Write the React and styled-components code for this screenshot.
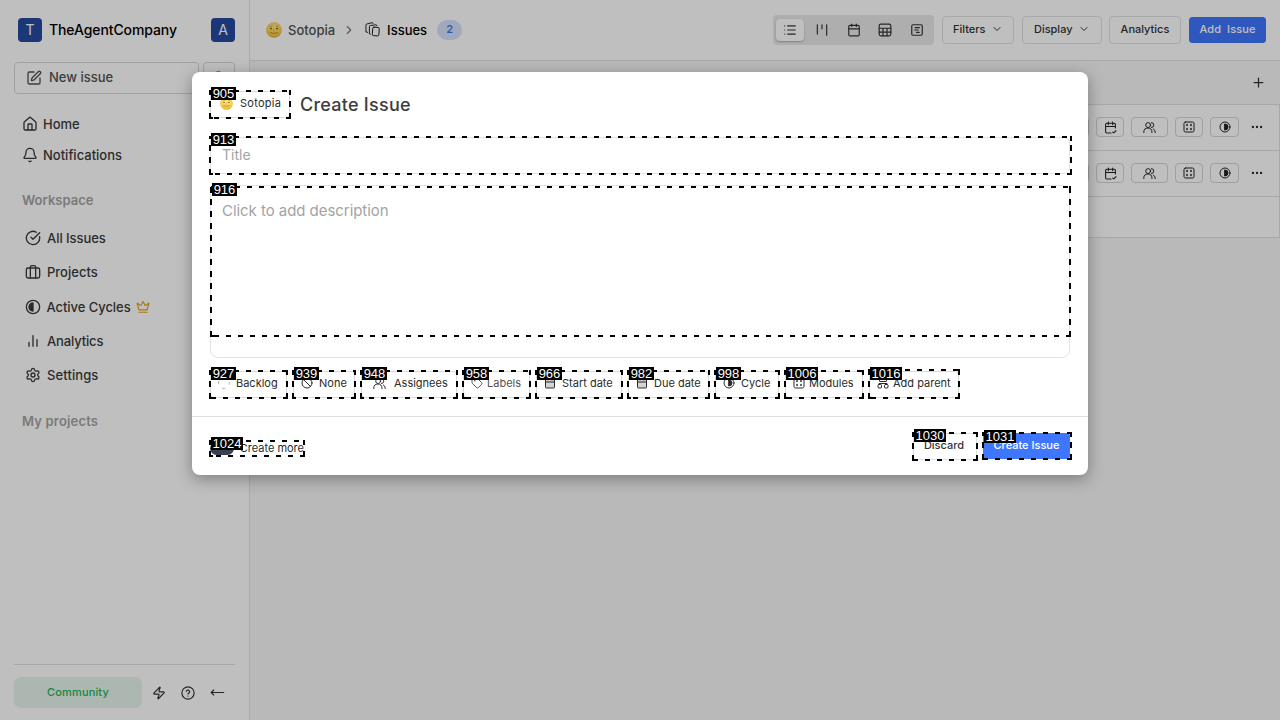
import React from "react";
import styled, { createGlobalStyle } from "styled-components";
import {
  SquarePen, Search, House, Bell, CircleCheckBig, Crown, Settings, Zap,
  MoveLeft, ChevronRight, ChevronDown, List, Calendar, SquareChartGantt, Plus, Ellipsis, Tag, Ban,
} from "lucide-react";

const Global = createGlobalStyle`
  * { box-sizing: border-box; }
  body { margin: 0; background: #f7f7f7; font-family: Inter, "Liberation Sans", sans-serif; color: #171717; overflow: hidden; }
  svg { flex: none; display: block; }
`;

const Screen = styled.div`position: relative; width: 1280px; height: 720px; display: flex; overflow: hidden;`;

/* Sidebar */
const Sidebar = styled.aside`
  width: 250px; height: 720px; flex: none; background: #fff; border-right: 1px solid #e3e3e3;
  padding: 18px 14px 12px; display: flex; flex-direction: column;
`;
const Brand = styled.div`display: flex; align-items: center; height: 24px; padding-left: 4px;`;
const Avatar = styled.span`
  width: 24px; height: 24px; border-radius: 4px; background: #264aa0; color: #fff;
  display: flex; align-items: center; justify-content: center; font-size: 14px; line-height: 24px;
`;
const BrandName = styled.span`flex: 1; margin: -2px 0 0 7px; font-size: 14px; font-weight: 500; color: #000; letter-spacing: -0.1px;`;
const Actions = styled.div`display: flex; gap: 4px; margin-top: 20px;`;
const ActionButton = styled.div`
  height: 32px; width: ${(p) => p.$w}px; border: 1px solid #d6d6d6; border-radius: 4px; display: flex; align-items: center;
  padding-left: ${(p) => p.$pad}px; gap: 7px; font-size: 13px; font-weight: 500; color: #525252;
`;
const ActionText = styled.span`margin-top: -3px;`;
const Nav = styled.nav`display: flex; flex-direction: column; padding-left: ${(p) => p.$pad}px; margin-top: ${(p) => p.$top}px;`;
const NavItem = styled.div`
  height: ${(p) => p.$h}px; display: flex; align-items: center; gap: ${(p) => p.$gap || 6}px;
  font-size: 13px; font-weight: 500; color: #3a3a3a; letter-spacing: ${(p) => p.$ls || 0}px;
`;
const Heading = styled.div`
  margin: ${(p) => p.$top}px 0 0 8px; height: 20px; line-height: 20px; font-size: 13px; font-weight: 600; color: #a3a3a3;
  letter-spacing: ${(p) => p.$ls || 0}px;
`;
const SideFoot = styled.div`
  margin-top: auto; border-top: 1px solid #e0e0e0; padding-top: 12px; display: flex; align-items: center; color: #333;
`;
const Community = styled.div`
  width: 128px; height: 31px; flex: none; border-radius: 7px; background: #e6f5ec; color: #22b35a; font-size: 11px; font-weight: 500;
  display: flex; align-items: center; justify-content: center; margin-right: 2px; padding-bottom: 2px; letter-spacing: .15px;
`;
const FootIcon = styled.span`width: 29.5px; display: flex; justify-content: center;`;

/* Main area */
const Main = styled.main`flex: 1; display: flex; flex-direction: column;`;
const TopBar = styled.header`
  height: 61px; background: #fff; border-bottom: 1px solid #e0e0e0; display: flex; align-items: center; padding: 0 14px 1px 15px;
`;
const Crumb = styled.span`font-size: 13px; font-weight: 500; color: ${(p) => p.$c}; margin-left: ${(p) => p.$ml}px;`;
const Gap = styled.span`width: ${(p) => p.$w}px; flex: none;`;
const Count = styled.span`
  width: 25px; height: 20px; border-radius: 10px; margin-left: 10px; background: #d6e0fb; color: #3f76ff; font-size: 11px;
  font-weight: 600; display: flex; align-items: center; justify-content: center; padding-bottom: 1px;
`;
const Segments = styled.div`
  margin-left: auto; width: 161px; height: 30px; border-radius: 4px; background: #e8e8e8; display: flex; align-items: center;
  gap: 3.75px; padding: 0 3px; color: #333;
`;
const Segment = styled.span`
  width: 28px; height: 22px; border-radius: 4px; display: flex; align-items: center; justify-content: center;
  background: ${(p) => (p.$on ? "#fff" : "transparent")}; box-shadow: ${(p) => (p.$on ? "0 1px 2px rgba(0,0,0,.25)" : "none")};
`;
const BarButton = styled.div`
  width: ${(p) => p.$w}px; height: ${(p) => (p.$primary ? 26 : 28)}px; margin-left: ${(p) => p.$ml}px; border-radius: ${(p) => (p.$primary ? 3 : 4)}px;
  border: 1px solid ${(p) => (p.$primary ? "#3f76ff" : "#e0e0e0")}; background: ${(p) => (p.$primary ? "#3f76ff" : "#fff")};
  color: ${(p) => (p.$primary ? "#fff" : "#333")}; font-size: 11px; font-weight: 500; white-space: pre;
  letter-spacing: ${(p) => p.$ls || 0}px; display: flex; align-items: center; justify-content: center; gap: 5.5px; padding-bottom: 1px;
`;
const GroupRow = styled.div`height: 44px; border-bottom: 1px solid #e0e0e0; display: flex; align-items: center; justify-content: flex-end; padding-right: 14px; color: #333;`;
const IssueRow = styled.div`
  height: ${(p) => p.$h}px; background: #fff; border-bottom: 1px solid #e0e0e0; border-right: 1px solid #e0e0e0; display: flex; align-items: center;
  justify-content: flex-end; padding: 0 15px 1px 0; gap: 7px; color: #222;
`;
const Prop = styled.span`
  width: ${(p) => p.$w}px; height: 20px; border: 1px solid #d4d4d4; border-radius: 4px; display: flex; align-items: center; justify-content: center;
`;
const More = styled.span`margin-left: 4px;`;

/* Dialog */
const Backdrop = styled.div`
  position: absolute; inset: 0; background: rgba(0, 0, 0, 0.25); display: flex; justify-content: center; align-items: flex-start; padding-top: 72px;
`;
const Dialog = styled.section`
  width: 896px; height: 403px; border-radius: 8px; background: #fff; box-shadow: 0 4px 16px rgba(0, 0, 0, 0.34);
  display: flex; flex-direction: column;
`;
const DialogBody = styled.div`height: 345px; border-bottom: 1px solid #e0e0e0; padding: 19px 18px 0; display: flex; flex-direction: column; align-items: flex-start;`;
const TitleRow = styled.div`display: flex; align-items: center; height: 27px;`;
const DialogTitle = styled.h3`margin: 0 0 0 10px; font-size: 18px; line-height: 27px; font-weight: 500; color: #3d3d3d; letter-spacing: .25px;`;
const Chip = styled.div`
  position: relative; width: ${(p) => p.$w}px; height: 27px; border: 1px solid #d9d9d9; border-radius: 4px; display: flex; align-items: center;
  padding: 0 0 3px ${(p) => p.$pad}px; gap: ${(p) => p.$gap}px; font-size: 11px; color: ${(p) => p.$c || "#2b2b2b"}; white-space: nowrap;
  letter-spacing: ${(p) => p.$ls || 0}px;
`;
const TitleField = styled.div`
  position: relative; margin-top: 19px; width: 860px; height: 37px; border: 1px solid #e3e3e3; border-radius: 6px; padding: 0 11px;
  font-size: 14px; line-height: 33px; color: #a3a3a3;
`;
const Editor = styled.div`
  position: relative; margin-top: 11px; width: 860px; height: 173px; border: 1px solid #e3e3e3; border-radius: 8px; padding: 13px 11px;
  font-size: 15px; line-height: 24px; color: #a3a3a3; letter-spacing: -0.05px;
`;
const Chips = styled.div`display: flex; gap: 6px; margin-top: 13px;`;
const DialogFoot = styled.footer`height: 58px; display: flex; align-items: flex-start; padding: 16px 18px 0;`;
const CreateMore = styled.div`
  position: relative; width: 94px; height: 15px; margin-top: 8px; display: flex; align-items: center; justify-content: space-between;
  font-size: 11px; line-height: 13px; color: #2b2b2b; white-space: nowrap; padding-bottom: 1px;
`;
const Toggle = styled.span`width: 24px; height: 13px; border-radius: 7px; background: #374151; flex: none;`;
const FootButton = styled.div`
  position: relative; width: ${(p) => p.$w}px; height: ${(p) => (p.$primary ? 26 : 27)}px; margin-left: ${(p) => p.$ml};
  border: 1px solid ${(p) => (p.$primary ? "#3f76ff" : "#e0e0e0")}; border-radius: 3px; background: ${(p) => (p.$primary ? "#3f76ff" : "#fff")};
  color: ${(p) => (p.$primary ? "#fff" : "#333")}; font-size: 11px; font-weight: 500; display: flex; align-items: center; justify-content: center;
  padding: 0 ${(p) => (p.$primary ? 0 : 2)}px ${(p) => (p.$primary ? 2 : 4)}px 0; white-space: nowrap;
`;

/* Numbered element markers laid over the controls */
const across = "repeating-linear-gradient(90deg, #000 0 5px, transparent 5px 12px)";
const acrossEnd = "repeating-linear-gradient(270deg, #000 0 5px, transparent 5px 12px)";
const upward = "repeating-linear-gradient(0deg, #000 0 6px, transparent 6px 12px)";
const solid = "linear-gradient(#000, #000)";
const Frame = styled.span`
  position: absolute; top: ${(p) => p.$t}px; left: ${(p) => p.$l}px; right: ${(p) => p.$r}px; bottom: ${(p) => p.$b}px;
  background:
    ${across} 1px 0 / 100% 2px no-repeat,
    ${acrossEnd} 0 100% / 100% 2px no-repeat,
    ${upward} 0 0 / 2px 100% no-repeat,
    ${upward} 100% 0 / 2px 100% no-repeat,
    ${solid} 100% 0 / 2px 5px no-repeat,
    ${solid} 0 100% / 4px 2px no-repeat;
  pointer-events: none;
`;
const Num = styled.span`
  position: absolute; left: 2px; top: ${(p) => p.$t}px; width: ${(p) => (p.$long ? 32 : 25)}px; height: 13px; background: #000; color: #fff;
  font: 13px/13px "Liberation Sans", Arial, sans-serif; letter-spacing: 0; text-align: center;
`;
const Mark = ({ n, t = -2, l = -2, r = -2, b = -2, lt = -3 }) => (
  <Frame $t={t} $l={l} $r={r} $b={b}><Num $t={lt} $long={n > 999}>{n}</Num></Frame>
);

/* Icons */
const Svg = ({ s = 14, w = 2, children, ...p }) => (
  <svg width={s} height={s} viewBox="0 0 24 24" fill="none" stroke="currentColor" strokeWidth={w} strokeLinecap="round" strokeLinejoin="round" {...p}>{children}</svg>
);
const Face = ({ s = 16 }) => (
  <svg width={s} height={s} viewBox="0 0 16 16">
    <defs><radialGradient id="moon" cx=".5" cy=".35" r=".65"><stop offset="0" stopColor="#ffe680" /><stop offset=".7" stopColor="#f8cf4a" /><stop offset="1" stopColor="#e3a92e" /></radialGradient></defs>
    <circle cx="8" cy="8" r="7.8" fill="url(#moon)" />
    <ellipse cx="5" cy="6.6" rx=".8" ry=".9" fill="#5b4520" /><ellipse cx="11" cy="6.6" rx=".8" ry=".9" fill="#5b4520" />
    <path d="M3.6 5q1.2-1 2.6-.3M9.8 4.7q1.4-.7 2.6.3" stroke="#c08a2a" strokeWidth=".6" fill="none" />
    <path d="M8 6.5l-.5 2.500h1" stroke="#d09a30" strokeWidth=".6" fill="none" />
    <path d="M4.500 10.800q3.500 1.400 7 0" stroke="#a8701f" strokeWidth=".8" fill="none" strokeLinecap="round" />
  </svg>
);
const Half = ({ left, s }) => (
  <Svg s={s}><circle cx="12" cy="12" r="10" /><path d={left ? "M12 6a6 6 0 0 0 0 12z" : "M12 6a6 6 0 0 1 0 12z"} fill="currentColor" /></Svg>
);
const Case = () => <Svg s={16}><rect x="2" y="6" width="20" height="15" rx="2.500" /><path d="M8 21V4.500A2 2 0 0 1 10 2.500h4a2 2 0 0 1 2 2V21" /></Svg>;
const Bars = () => <Svg s={16}><path d="M18 20V10M12 20V4M6 20v-6" /></Svg>;
const Help = () => <Svg s={14}><circle cx="12" cy="12" r="10.500" /><path d="M9 9a3 3 0 0 1 5.800 1c0 2-2.800 2.600-2.800 3.600M12 17.300h.01" /></Svg>;
const Stack = () => (
  <Svg s={15} w={1.500}><rect x="12" y="8.500" width="10.500" height="13.500" rx="2" transform="rotate(4 17 15)" /><path d="M8.500 19.500l-1.500-.5V7.500a2 2 0 0 1 2-2l9-1 .8 1.500M4 16.500l-2.500-.5V5a2 2 0 0 1 2-2L12 1l1 1.500" /></Svg>
);
const Kanban = () => <Svg s={14}><path d="M4 3v16M12 3v7M20 3v18" /></Svg>;
const Sheet = () => <Svg s={14}><rect x="2" y="2" width="20" height="20" rx="3" /><path d="M2 9h20M2 15.500h20M8.500 9v13M15.500 9v13" /></Svg>;
const People = ({ s = 14 }) => (
  <Svg s={s} w={1.800}><circle cx="9.500" cy="7.500" r="4.500" /><path d="M1.500 21.500v-1a7.500 7.500 0 0 1 15 0v1M15.500 3a4.500 4.500 0 0 1 0 9M19 14.500q3.500 2 3.500 6v1" /></Svg>
);
const Dice = ({ s = 12 }) => (
  <Svg s={s}><rect x="2" y="2" width="20" height="20" rx="3" /><path d="M8 7v2M16 7v2M8 15v2M16 15v2" strokeWidth="3" /></Svg>
);
const CalCheck = () => <Svg s={13}><path d="M21 13V6a2 2 0 0 0-2-2H5a2 2 0 0 0-2 2v14a2 2 0 0 0 2 2h8M3 10h18M8 2v5M16 2v5M16 20.500l2 1.500 4-4" /></Svg>;
const CalFill = () => <Svg s={12}><rect x="3" y="4" width="18" height="18" rx="2" fill="#d4d4d4" /><path d="M3 10h18M8 2v4M16 2v4" /></Svg>;
const Parent = () => <Svg s={12} w={2}><rect x="5" y="3" width="14" height="6" rx="1" /><path d="M4 15v-2h16v2" /><rect x="2" y="15" width="7" height="7" rx="2" /><rect x="15" y="15" width="7" height="7" rx="2" /></Svg>;
const Backlog = () => <Svg s={12} stroke="#a3a3a3"><circle cx="12" cy="12" r="10.800" pathLength="64" strokeDasharray="6 10" strokeDashoffset="3" strokeLinecap="butt" /></Svg>;

const issues = [1, 2];

export default function App() {
  return (
    <Screen>
      <Global />
      <Sidebar>
        <Brand><Avatar>T</Avatar><BrandName>TheAgentCompany</BrandName><Avatar>A</Avatar></Brand>
        <Actions>
          <ActionButton $w={185} $pad={11}><SquarePen size={16} /><ActionText>New issue</ActionText></ActionButton>
          <ActionButton $w={32} $pad={7}><Search size={16} /></ActionButton>
        </Actions>
        <Nav $pad={8} $top={14}>
          <NavItem $h={31} $gap={5}><House size={16} />Home</NavItem>
          <NavItem $h={31} $gap={5}><Bell size={16} />Notifications</NavItem>
        </Nav>
        <Heading $top={20}>Workspace</Heading>
        <Nav $pad={11} $top={11}>
          <NavItem $h={34.25} $ls={-0.05}><CircleCheckBig size={16} />All Issues</NavItem>
          <NavItem $h={34.25}><Case />Projects</NavItem>
          <NavItem $h={34.25} $gap={5.5} $ls={-0.06}><Half left s={16} />Active Cycles<Crown size={14} color="#e0a31c" /></NavItem>
          <NavItem $h={34.25} $ls={-0.15}><Bars />Analytics</NavItem>
          <NavItem $h={34.25} $ls={0.1}><Settings size={16} />Settings</NavItem>
        </Nav>
        <Heading $top={19} $ls={0.18}>My projects</Heading>
        <SideFoot>
          <Community>Community</Community>
          <FootIcon><Zap size={14} /></FootIcon>
          <FootIcon><Help /></FootIcon>
          <FootIcon><MoveLeft size={15} strokeWidth={1.7} /></FootIcon>
        </SideFoot>
      </Sidebar>

      <Main>
        <TopBar>
          <Gap $w={1} /><Face /><Crumb $c="#525252" $ml={6}>Sotopia</Crumb>
          <Gap $w={7} /><ChevronRight size={14} color="#777" /><Gap $w={9} />
          <Stack /><Crumb $c="#000" $ml={7}>Issues</Crumb><Count>2</Count>
          <Segments>
            <Segment $on><List size={14} /></Segment>
            <Segment><Kanban /></Segment>
            <Segment><Calendar size={14} /></Segment>
            <Segment><Sheet /></Segment>
            <Segment><SquareChartGantt size={14} /></Segment>
          </Segments>
          <BarButton $w={72} $ml={8}>Filters<ChevronDown size={12} /></BarButton>
          <BarButton $w={80} $ml={8}>Display<ChevronDown size={12} /></BarButton>
          <BarButton $w={72} $ml={7}>Analytics</BarButton>
          <BarButton $w={77} $ml={8} $primary $ls={0.1}>Add  Issue</BarButton>
        </TopBar>
        <GroupRow><Plus size={15} /></GroupRow>
        {issues.map((i) => (
          <IssueRow key={i} $h={46}>
            <Prop $w={28} />
            <Prop $w={28}><CalCheck /></Prop>
            <Prop $w={37}><People s={13} /></Prop>
            <Prop $w={28}><Dice /></Prop>
            <Prop $w={29}><Half s={12} /></Prop>
            <More><Ellipsis size={14} /></More>
          </IssueRow>
        ))}
        <IssueRow $h={41} />
      </Main>

      <Backdrop>
        <Dialog>
          <DialogBody>
            <TitleRow>
              <Chip $w={80} $pad={9} $gap={7} $ls={0.25}><Face s={13} />Sotopia<Mark n={905} /></Chip>
              <DialogTitle>Create Issue</DialogTitle>
            </TitleRow>
            <TitleField>Title<Mark n={913} r={-3} /></TitleField>
            <Editor>Click to add description<Mark n={916} t={0} l={-1} r={-2} b={20} /></Editor>
            <Chips>
              <Chip $w={77} $pad={7} $gap={6}><Backlog />Backlog<Mark n={927} /></Chip>
              <Chip $w={62} $pad={7} $gap={6}><Ban size={12} />None<Mark n={939} /></Chip>
              <Chip $w={96} $pad={11} $gap={8}><People s={13} />Assignees<Mark n={948} /></Chip>
              <Chip $w={67} $pad={7} $gap={4} $c="#525252"><Tag size={12} />Labels<Mark n={958} /></Chip>
              <Chip $w={86} $pad={7} $gap={6}><CalFill />Start date<Mark n={966} /></Chip>
              <Chip $w={81} $pad={7} $gap={6}><CalFill />Due date<Mark n={982} /></Chip>
              <Chip $w={64} $pad={7} $gap={6}><Half s={12} />Cycle<Mark n={998} /></Chip>
              <Chip $w={78} $pad={7} $gap={4}><Dice />Modules<Mark n={1006} /></Chip>
              <Chip $w={90} $pad={7} $gap={4}><Parent />Add parent<Mark n={1016} t={-3} lt={-2} /></Chip>
            </Chips>
          </DialogBody>
          <DialogFoot>
            <CreateMore><Toggle />Create more<Mark n={1024} t={-1} l={-1} r={-1} b={-1} /></CreateMore>
            <FootButton $w={64} $ml="auto">Discard<Mark n={1030} /></FootButton>
            <FootButton $w={87} $ml="6px" $primary>Create Issue<Mark n={1031} r={-3} lt={-2} /></FootButton>
          </DialogFoot>
        </Dialog>
      </Backdrop>
    </Screen>
  );
}
